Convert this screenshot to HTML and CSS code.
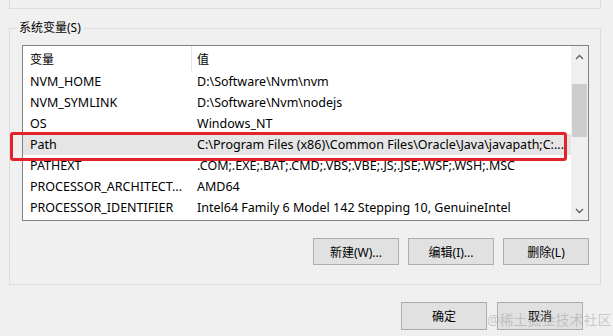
FILE: index.html
```html
<!DOCTYPE html>
<html lang="zh-CN">
<head>
<meta charset="utf-8">
<title>系统变量</title>
<link rel="stylesheet" href="styles.css">
</head>
<body>
<div class="page">
  <div class="user-box"></div>
  <fieldset class="group">
    <legend>系统变量(S)</legend>
    <div class="list">
      <div class="rows">
        <div class="row head"><span class="c1">变量</span><span class="c2">值</span></div>
        <div class="row"><span class="c1">NVM_HOME</span><span class="c2">D:\Software\Nvm\nvm</span></div>
        <div class="row"><span class="c1">NVM_SYMLINK</span><span class="c2">D:\Software\Nvm\nodejs</span></div>
        <div class="row"><span class="c1">OS</span><span class="c2">Windows_NT</span></div>
        <div class="row sel"><span class="c1">Path</span><span class="c2">C:\Program Files (x86)\Common Files\Oracle\Java\javapath;C:...</span></div>
        <div class="row"><span class="c1">PATHEXT</span><span class="c2">.COM;.EXE;.BAT;.CMD;.VBS;.VBE;.JS;.JSE;.WSF;.WSH;.MSC</span></div>
        <div class="row"><span class="c1">PROCESSOR_ARCHITECT...</span><span class="c2">AMD64</span></div>
        <div class="row"><span class="c1">PROCESSOR_IDENTIFIER</span><span class="c2">Intel64 Family 6 Model 142 Stepping 10, GenuineIntel</span></div>
      </div>
      <div class="scrollbar">
        <svg class="arrow" width="9" height="6" viewBox="0 0 9 6"><path d="M1 5 L4.5 1.5 L8 5" fill="none" stroke="#606060" stroke-width="1.4"/></svg>
        <div class="track"><div class="thumb"></div></div>
        <svg class="arrow" width="9" height="6" viewBox="0 0 9 6"><path d="M1 1 L4.5 4.5 L8 1" fill="none" stroke="#606060" stroke-width="1.4"/></svg>
      </div>
      <div class="highlight"></div>
    </div>
    <div class="actions">
      <button class="btn">新建(W)...</button>
      <button class="btn">编辑(I)...</button>
      <button class="btn">删除(L)</button>
    </div>
  </fieldset>
  <div class="footer">
    <button class="btn">确定</button>
    <button class="btn">取消</button>
    <span class="watermark">@稀土掘金技术社区</span>
  </div>
</div>
</body>
</html>
```
FILE: styles.css
```css
* { box-sizing: border-box; }
html, body {
  margin: 0;
  padding: 0;
  background: #f0f0f0;
}
body {
  width: 613px;
  height: 336px;
  overflow: hidden;
  font-family: "Noto Sans", "Noto Sans CJK SC", sans-serif;
  font-size: 12px;
  color: #000;
}
.page {
  position: relative;
  width: 613px;
  height: 336px;
}
.user-box {
  margin-left: 9px;
  width: 592px;
  height: 9px;
  border: 1px solid #dcdcdc;
  border-top: none;
}
.group {
  margin: 11px 0 0 9px;
  width: 592px;
  height: 265px;
  padding: 0;
  border: 1px solid #dcdcdc;
  min-width: 0;
}
.group legend {
  margin-left: 6px;
  padding: 0 3px;
  line-height: 16px;
  color: #000;
}
.list {
  position: relative;
  margin: 9px 0 0 12px;
  width: 567px;
  height: 176px;
  border: 1px solid #828282;
  background: #fff;
  display: flex;
}
.rows {
  flex: 1;
  overflow: hidden;
  font-size: 12.5px;
}
.row {
  display: flex;
  height: 21px;
  align-items: center;
  white-space: nowrap;
}
.row.head {
  height: 25px;
  font-size: 12px;
}
.row.head .c1 {
  border-right: 1px solid #e5e5e5;
  height: 25px;
  display: flex;
  align-items: center;
}
.c1 {
  width: 169px;
  padding-left: 7px;
  flex: none;
}
.c2 {
  padding-left: 5px;
}
.row.sel {
  background: #e5e5e5;
}
.highlight {
  position: absolute;
  left: -13px;
  top: 86px;
  width: 557px;
  height: 29px;
  border: 3px solid #e3232c;
  border-radius: 3px;
}
.scrollbar {
  width: 17px;
  flex: none;
  background: #f0f0f0;
  display: flex;
  flex-direction: column;
  align-items: center;
  padding: 8px 0 6px;
}
.arrow {
  display: block;
  flex: none;
}
.track {
  flex: 1;
  width: 100%;
  padding: 24px 1px 0 1px;
}
.thumb {
  height: 53px;
  background: #cdcdcd;
}
.actions {
  display: flex;
  justify-content: flex-end;
  gap: 9px;
  margin: 17px 11px 0 0;
}
.btn {
  width: 86px;
  height: 27px;
  background: #e1e1e1;
  border: 1px solid #adadad;
  border-radius: 0;
  font-family: "Noto Sans", "Noto Sans CJK SC", sans-serif;
  font-size: 12px;
  color: #000;
  padding: 0;
}
.footer {
  position: relative;
  display: flex;
  justify-content: flex-end;
  gap: 10px;
  padding: 17px 30px 0 0;
}
.footer .btn {
  height: 28px;
}
.watermark {
  position: absolute;
  left: 487px;
  top: 24px;
  font-size: 14px;
  color: rgba(160, 160, 160, 0.5);
  white-space: nowrap;
}
```
